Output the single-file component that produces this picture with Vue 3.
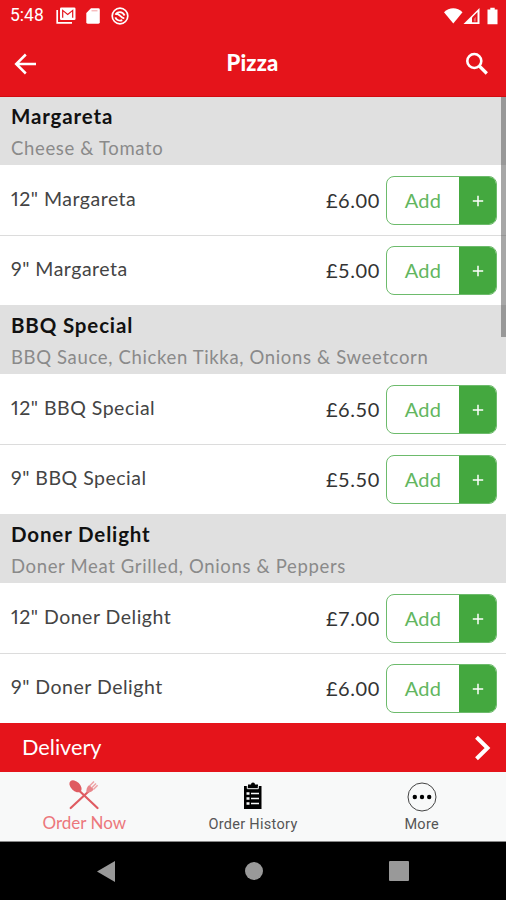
<template>
  <div class="app">
    <header class="top">
      <div class="status-bar">
        <span class="clock">5:48</span>
        <svg class="status-mail" viewBox="0 0 20 17" width="20" height="17">
          <path d="M1.2 3v12.8H16" fill="none" stroke="#fff" stroke-width="1.7" />
          <rect x="4" y="0.5" width="15.5" height="12.5" rx="1.3" fill="#fff" />
          <path d="M6.7 10.8V3.4l5 4 5-4v7.4" fill="none" stroke="#e5141b" stroke-width="1.2" />
        </svg>
        <svg class="status-card" viewBox="0 0 14 16" width="14" height="16">
          <path d="M5 0.3h7.4a1.4 1.4 0 0 1 1.4 1.4v12.6a1.4 1.4 0 0 1-1.4 1.4H1.7a1.4 1.4 0 0 1-1.4-1.4V5z" fill="#fff" />
          <path d="M5.500 2.800h6" stroke="#e5141b" stroke-width="1" opacity="0.4" />
        </svg>
        <svg class="status-sync" viewBox="0 0 18 18" width="18" height="18">
          <circle cx="9" cy="9" r="7.800" fill="none" stroke="#fff" stroke-width="1.700" />
          <path d="M4.400 7.800C6.500 4 11.500 4 13.600 8.500M4.300 10.300c1.200 3 4.200 4 7 2.800M5 6.800c3.500-.5 4.500 4 8.300 4.500" fill="none" stroke="#fff" stroke-width="1.800" />
        </svg>
        <span class="spacer"></span>
        <svg viewBox="0 0 54 18" width="54" height="18">
          <path d="M0 5.200C5-.200 13.500-.200 18.500 5.200L9.300 16.500z" fill="#fff" />
          <path d="M19.500 17L35.500 1v16z" fill="#fff" />
          <path d="M28 15.200V10.500l5.500-5.500v10.200z" fill="#e5141b" />
          <path d="M29.800 14.500v-2.500l2-2.300v4.800z" fill="#fff" opacity="0.35" />
          <path d="M43.500 2.500h2.800V.8h4.400v1.700h2.800v14.700h-10z" fill="#fff" />
        </svg>
      </div>
      <div class="title-bar">
        <svg viewBox="0 0 24 22" width="24" height="22">
          <path d="M22 11H2.500M11.800 1.500L2.200 11l9.600 9.500" fill="none" stroke="#fff" stroke-width="2.500" />
        </svg>
        <h1>Pizza</h1>
        <svg viewBox="0 0 24 24" width="24" height="24">
          <circle cx="9.300" cy="9" r="7" fill="none" stroke="#fff" stroke-width="2.600" />
          <path d="M14.300 14l7.500 7.500" stroke="#fff" stroke-width="3.200" />
        </svg>
      </div>
    </header>

    <main class="menu">
      <section v-for="group in groups" :key="group.name" class="group">
        <div class="group-header">
          <h2>{{ group.name }}</h2>
          <p>{{ group.description }}</p>
        </div>
        <div v-for="item in group.items" :key="item.name" class="item">
          <span class="item-name">{{ item.name }}</span>
          <span class="item-price">£{{ item.price.toFixed(2) }}</span>
          <div class="add-button" @click="addItem(item)">
            <span class="add-label">Add</span>
            <span class="add-plus">
              <svg viewBox="0 0 12 12" width="12" height="12">
                <path d="M6 .8v10.400M.8 6h10.400" stroke="#fff" stroke-width="1.500" />
              </svg>
            </span>
          </div>
        </div>
      </section>
      <div class="scrollbar"></div>
    </main>

    <div class="delivery">
      <span>Delivery</span>
      <svg viewBox="0 0 17 26" width="17" height="26">
        <path d="M2.500 2.200L13.500 13l-11 10.800" fill="none" stroke="#fff" stroke-width="4" />
      </svg>
    </div>

    <nav class="tabs">
      <div class="tab tab-active">
        <svg viewBox="0 0 30 30" width="30" height="30">
          <path d="M10 10.500L28.500 28" stroke="#df5b61" stroke-width="2.200" stroke-linecap="round" />
          <path d="M20 11L1.700 28" stroke="#df5b61" stroke-width="2.200" stroke-linecap="round" />
          <ellipse cx="6.500" cy="6.300" rx="4.600" ry="7.200" transform="rotate(-45 6.500 6.300)" fill="#df5b61" />
          <path d="M17.500 12.500c-.5-3.500.5-5.500 2.700-7.500l4.600 4.300c-2 2.500-4 3.700-7.300 3.200z" fill="#e8858a" />
          <path d="M20.800 5.800l4.200-4.300M22.800 7.700l4.200-4.300M24.600 9.200l4-4" stroke="#eda2a5" stroke-width="1.500" />
        </svg>
        <span>Order Now</span>
      </div>
      <div class="tab">
        <svg viewBox="0 0 18 27" width="18" height="27">
          <path d="M0 4h4V2.500h3a2 2 0 0 1 4 0h3V4h3.500v23H0z" fill="#000" />
          <path d="M3.300 4v2.700h11V4" fill="none" stroke="#f8f9f9" stroke-width="1" />
          <path d="M2.500 11.500h3M2.500 16.500h3M2.500 21.500h3" stroke="#f8f9f9" stroke-width="2.600" />
          <path d="M7 11.500h8M7 16.500h8M7 21.500h8" stroke="#f8f9f9" stroke-width="1.600" />
        </svg>
        <span>Order History</span>
      </div>
      <div class="tab">
        <svg viewBox="0 0 30 30" width="30" height="30">
          <circle cx="15" cy="15" r="14" fill="none" stroke="#444" stroke-width="1" />
          <circle cx="7.800" cy="15" r="2.200" />
          <circle cx="15" cy="15" r="2.200" />
          <circle cx="22.200" cy="15" r="2.200" />
        </svg>
        <span>More</span>
      </div>
    </nav>

    <footer class="system-nav">
      <svg viewBox="0 0 18 21" width="18" height="21"><path d="M0 10.500L18 0v21z" fill="#999" /></svg>
      <svg class="home" viewBox="0 0 18 18" width="18" height="18"><circle cx="9" cy="9" r="9" fill="#999" /></svg>
      <svg viewBox="0 0 20 20" width="20" height="20"><rect width="20" height="20" rx="1" fill="#999" /></svg>
    </footer>
  </div>
</template>

<script setup>
import { ref } from "vue";

const groups = [
  {
    name: "Margareta",
    description: "Cheese & Tomato",
    items: [
      { name: '12" Margareta', price: 6 },
      { name: '9" Margareta', price: 5 },
    ],
  },
  {
    name: "BBQ Special",
    description: "BBQ Sauce, Chicken Tikka, Onions & Sweetcorn",
    items: [
      { name: '12" BBQ Special', price: 6.5 },
      { name: '9" BBQ Special', price: 5.5 },
    ],
  },
  {
    name: "Doner Delight",
    description: "Doner Meat Grilled, Onions & Peppers",
    items: [
      { name: '12" Doner Delight', price: 7 },
      { name: '9" Doner Delight', price: 6 },
    ],
  },
];

const basket = ref([]);

function addItem(item) {
  basket.value.push(item);
}
</script>

<style>
body {
  margin: 0;
  background: #000;
}
</style>

<style scoped>
.app {
  width: 506px;
  height: 900px;
  display: flex;
  flex-direction: column;
  overflow: hidden;
  background: #fff;
  font-family: Lato, "Open Sans", sans-serif;
}

svg {
  display: block;
  flex: none;
}

.top {
  height: 97px;
  box-sizing: border-box;
  background: #e5141b;
  border-bottom: 1px solid #d20b10;
  color: #fff;
}

.status-bar {
  display: flex;
  align-items: center;
  height: 31px;
  padding: 0 8px 0 10px;
}

.clock {
  width: 46px;
  font-family: Roboto, sans-serif;
  font-size: 17.5px;
  line-height: 31px;
}

.status-card {
  margin-left: 10px;
}

.status-sync {
  margin-left: 11px;
}

.spacer {
  flex: 1;
}

.title-bar {
  display: flex;
  align-items: center;
  justify-content: space-between;
  height: 65px;
  padding: 0 17px 0 14px;
}

.title-bar h1 {
  margin: 0;
  padding: 0 0 2px 2px;
  font-size: 22px;
  font-weight: 900;
  letter-spacing: 0.2px;
}

.menu {
  position: relative;
  height: 626px;
  overflow: hidden;
}

.group {
  height: 209px;
}

.group:first-child {
  margin-top: -1px;
}

.group-header {
  box-sizing: border-box;
  height: 69px;
  padding: 7px 11px 0;
  background: #e0e0e0;
}

.group-header h2 {
  margin: 0;
  font-size: 20.5px;
  line-height: 26px;
  font-weight: 700;
  letter-spacing: 0.85px;
  color: #111;
}

.group-header p {
  margin: 6px 0 0;
  font-size: 18.5px;
  line-height: 26px;
  letter-spacing: 0.65px;
  color: #8a8a8a;
}

.item {
  display: flex;
  align-items: center;
  box-sizing: border-box;
  height: 70px;
  padding: 1px 9px 0 11px;
}

.item + .item {
  padding-top: 0;
  border-top: 1px solid #dcdcdc;
}

.item-name {
  flex: 1;
  padding-bottom: 4px;
  font-size: 19.5px;
  font-variant-numeric: proportional-nums;
  letter-spacing: 0.5px;
  color: #444;
}

.item-price {
  margin-right: 6px;
  padding-bottom: 1px;
  font-size: 20px;
  letter-spacing: 0.6px;
  color: #333;
}

.add-button {
  display: flex;
  box-sizing: border-box;
  width: 111px;
  height: 49px;
  border: 1px solid #6dbb6c;
  border-radius: 8px;
  overflow: hidden;
  cursor: pointer;
}

.add-label {
  flex: 1;
  font-size: 20px;
  line-height: 46px;
  text-align: center;
  letter-spacing: 0.3px;
  color: #62b660;
}

.add-plus {
  display: flex;
  align-items: center;
  justify-content: center;
  width: 37px;
  background: #44a83f;
}

.scrollbar {
  position: absolute;
  top: 0;
  right: 0;
  width: 5px;
  height: 240px;
  background: rgba(80, 80, 80, 0.5);
}

.delivery {
  display: flex;
  align-items: center;
  justify-content: space-between;
  box-sizing: border-box;
  height: 49px;
  padding: 0 15px 0 22px;
  background: #e5141b;
  color: #fff;
  font-size: 21.7px;
}

.delivery span {
  padding-bottom: 1px;
}

.tabs {
  display: flex;
  box-sizing: border-box;
  height: 70px;
  background: #f8f9f9;
  border-bottom: 1px solid #888;
}

.tab {
  display: flex;
  flex: 1;
  flex-direction: column;
  align-items: center;
  justify-content: space-between;
  padding: 10px 0 6px;
  font-family: Roboto, sans-serif;
  font-size: 14.5px;
  line-height: 20px;
  letter-spacing: 0.3px;
  color: #555;
}

.tab-active {
  padding: 8px 0 8px;
  font-family: Lato, sans-serif;
  font-size: 17px;
  letter-spacing: 0;
  color: #ec777c;
}

.system-nav {
  display: flex;
  align-items: center;
  justify-content: space-between;
  height: 58px;
  padding: 0 97px;
  background: #000;
}

.home {
  margin-left: 4px;
}
</style>
